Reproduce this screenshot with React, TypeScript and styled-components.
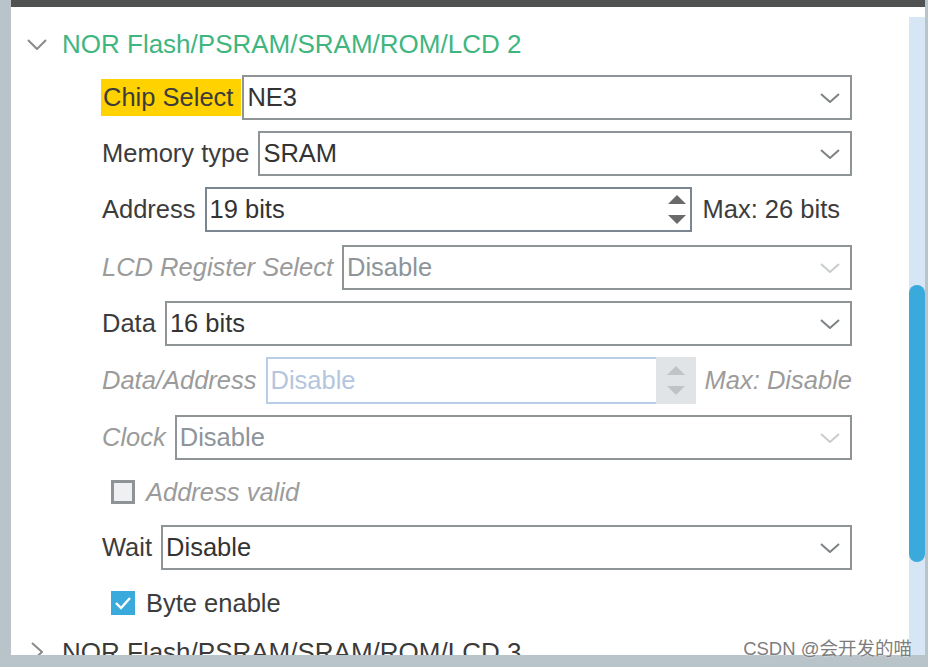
import React from "react";
import styled, { createGlobalStyle, css } from "styled-components";

const Global = createGlobalStyle`
  html, body { margin: 0; padding: 0; background: #b9c3ca; }
  * { box-sizing: border-box; }
`;

const FONT = `"Liberation Sans", Arial, sans-serif`;

const Frame = styled.div`
  position: relative;
  width: 928px;
  height: 667px;
  background: #b9c3ca;
  padding: 0 3px 12px 11px;
  display: flex;
  flex-direction: column;
  overflow: hidden;
  font-family: ${FONT};
`;

const TopBar = styled.div`
  height: 7px;
  flex-shrink: 0;
  background: #505252;
`;

const Body = styled.div`
  flex: 1;
  min-height: 0;
  display: flex;
  background: #ffffff;
`;

const Content = styled.div`
  flex: 1;
  min-width: 0;
  overflow: hidden;
  display: flex;
  flex-direction: column;
`;

const ScrollCol = styled.div`
  width: 16px;
  flex-shrink: 0;
  padding-top: 10px;
  display: flex;
  flex-direction: column;
`;

const Track = styled.div`
  flex: 1;
  background: #d6e6f4;
  padding-top: 268px;
`;

const Thumb = styled.div`
  height: 277px;
  background: #3aa9dc;
  border-radius: 8px;
`;

const Header = styled.div<{ $mt: number; $dark?: boolean }>`
  height: 40px;
  flex-shrink: 0;
  margin-top: ${(p) => p.$mt}px;
  display: flex;
  align-items: center;
  padding-left: 16px;
  gap: 15px;
  font-size: 26px;
  color: ${(p) => (p.$dark ? "#3a3a3a" : "#3fb67f")};
  white-space: nowrap;
`;

const HeaderIcon = styled.span`
  width: 20px;
  display: flex;
  justify-content: center;
  align-items: center;
`;

const Form = styled.div`
  padding: 0 57px 0 91px;
  margin-top: 11px;
  display: flex;
  flex-direction: column;
`;

const Row = styled.div<{ $h?: number; $gap?: number }>`
  display: flex;
  align-items: center;
  height: ${(p) => p.$h ?? 45}px;
  margin-bottom: ${(p) => p.$gap ?? 11}px;
  flex-shrink: 0;
`;

const Label = styled.span<{ $disabled?: boolean; $hl?: boolean }>`
  font-size: 25.5px;
  white-space: nowrap;
  color: ${(p) => (p.$disabled ? "#9b9b9b" : "#3c3c3c")};
  font-style: ${(p) => (p.$disabled ? "italic" : "normal")};
  margin-right: 9px;
  ${(p) =>
    p.$hl &&
    css`
      background: #ffd200;
      margin-left: -1px;
      margin-right: 1px;
      padding: 0 8px 0 2px;
      height: 37px;
      line-height: 37px;
    `}
`;

const Select = styled.div<{ $disabled?: boolean }>`
  flex: 1;
  height: 100%;
  border: 2px solid #8f9497;
  background: #fff;
  display: flex;
  align-items: center;
  padding: 0 10px 0 3px;
  font-size: 25.5px;
  color: ${(p) => (p.$disabled ? "#8d949a" : "#333333")};
`;

const Value = styled.span`
  flex: 1;
  white-space: nowrap;
`;

const SpinBox = styled.div<{ $disabled?: boolean }>`
  flex: 1;
  height: 100%;
  display: flex;
  align-items: stretch;
  border: 2px solid ${(p) => (p.$disabled ? "#b8cde6" : "#7a8691")};
  background: #fff;
  font-size: 25.5px;
  color: ${(p) => (p.$disabled ? "#b4c6de" : "#333333")};
`;

const SpinText = styled.span`
  flex: 1;
  display: flex;
  align-items: center;
  padding-left: 3px;
  white-space: nowrap;
`;

const SpinButtons = styled.div<{ $disabled?: boolean }>`
  width: ${(p) => (p.$disabled ? 40 : 25)}px;
  display: flex;
  flex-direction: column;
  justify-content: center;
  align-items: center;
  gap: 11px;
  ${(p) =>
    p.$disabled &&
    css`
      background: #e1e4e7;
      margin: -2px -2px -2px 0;
    `}
`;

const MaxText = styled.span<{ $disabled?: boolean; $trail?: number }>`
  font-size: 25.5px;
  white-space: nowrap;
  padding-left: ${(p) => (p.$disabled ? 9 : 11)}px;
  padding-right: ${(p) => p.$trail ?? 0}px;
  color: ${(p) => (p.$disabled ? "#9b9b9b" : "#3c3c3c")};
  font-style: ${(p) => (p.$disabled ? "italic" : "normal")};
`;

const CheckRow = styled.div<{ $gap: number }>`
  display: flex;
  align-items: center;
  height: 24px;
  margin-bottom: ${(p) => p.$gap}px;
  padding-left: 9px;
  gap: 11px;
  flex-shrink: 0;
`;

const Box = styled.span<{ $checked?: boolean }>`
  width: 24px;
  height: 24px;
  display: flex;
  align-items: center;
  justify-content: center;
  ${(p) =>
    p.$checked
      ? css`
          background: #3aa9dc;
        `
      : css`
          background: #eef0f2;
          border: 3px solid #8e9396;
        `}
`;

const CheckLabel = styled.span<{ $disabled?: boolean }>`
  font-size: 25.5px;
  white-space: nowrap;
  color: ${(p) => (p.$disabled ? "#9b9b9b" : "#3c3c3c")};
  font-style: ${(p) => (p.$disabled ? "italic" : "normal")};
`;

const Watermark = styled.div`
  position: absolute;
  right: 16px;
  bottom: 7px;
  font-family: "Liberation Sans", "Noto Sans CJK SC", sans-serif;
  font-size: 18.5px;
  color: #7d7d7d;
  text-shadow: 0 0 2px #ffffff;
  white-space: nowrap;
`;

const Chevron = ({ light }: { light?: boolean }) => (
  <svg width="20" height="10" viewBox="0 0 20 10">
    <polyline
      points="1,1 10,9 19,1"
      fill="none"
      stroke={light ? "#c9ccce" : "#7d8285"}
      strokeWidth="2"
    />
  </svg>
);

const Arrows = ({ light }: { light?: boolean }) => {
  const c = light ? "#c0c3c6" : "#6a6a6a";
  return (
    <>
      <svg width="18" height="9" viewBox="0 0 18 9">
        <polygon points="9,0 18,9 0,9" fill={c} />
      </svg>
      <svg width="18" height="9" viewBox="0 0 18 9">
        <polygon points="0,0 18,0 9,9" fill={c} />
      </svg>
    </>
  );
};

const SelectField = ({ value, disabled }: { value: string; disabled?: boolean }) => (
  <Select $disabled={disabled}>
    <Value>{value}</Value>
    <Chevron light={disabled} />
  </Select>
);

export default function App() {
  return (
    <>
      <Global />
      <Frame>
        <TopBar />
        <Body>
          <Content>
            <Header $mt={17}>
              <HeaderIcon>
                <svg width="20" height="11" viewBox="0 0 20 11">
                  <polyline points="1,1 10,10 19,1" fill="none" stroke="#8a8a8a" strokeWidth="2" />
                </svg>
              </HeaderIcon>
              NOR Flash/PSRAM/SRAM/ROM/LCD 2
            </Header>
            <Form>
              <Row>
                <Label $hl>Chip Select</Label>
                <SelectField value="NE3" />
              </Row>
              <Row>
                <Label>Memory type</Label>
                <SelectField value="SRAM" />
              </Row>
              <Row $gap={13}>
                <Label>Address</Label>
                <SpinBox>
                  <SpinText>19 bits</SpinText>
                  <SpinButtons>
                    <Arrows />
                  </SpinButtons>
                </SpinBox>
                <MaxText $trail={12}>Max: 26 bits</MaxText>
              </Row>
              <Row>
                <Label $disabled>LCD Register Select</Label>
                <SelectField value="Disable" disabled />
              </Row>
              <Row>
                <Label>Data</Label>
                <SelectField value="16 bits" />
              </Row>
              <Row $h={47}>
                <Label $disabled>Data/Address</Label>
                <SpinBox $disabled>
                  <SpinText>Disable</SpinText>
                  <SpinButtons $disabled>
                    <Arrows light />
                  </SpinButtons>
                </SpinBox>
                <MaxText $disabled>Max: Disable</MaxText>
              </Row>
              <Row $gap={20}>
                <Label $disabled>Clock</Label>
                <SelectField value="Disable" disabled />
              </Row>
              <CheckRow $gap={21}>
                <Box />
                <CheckLabel $disabled>Address valid</CheckLabel>
              </CheckRow>
              <Row $gap={21}>
                <Label>Wait</Label>
                <SelectField value="Disable" />
              </Row>
              <CheckRow $gap={0}>
                <Box $checked>
                  <svg width="24" height="24" viewBox="0 0 24 24">
                    <polyline points="5,12 10,17 19,7" fill="none" stroke="#ffffff" strokeWidth="2.4" />
                  </svg>
                </Box>
                <CheckLabel>Byte enable</CheckLabel>
              </CheckRow>
            </Form>
            <Header $mt={17} $dark>
              <HeaderIcon>
                <svg width="12" height="20" viewBox="0 0 12 20">
                  <polyline points="1,1 11,10 1,19" fill="none" stroke="#8a8a8a" strokeWidth="2" />
                </svg>
              </HeaderIcon>
              NOR Flash/PSRAM/SRAM/ROM/LCD 3
            </Header>
          </Content>
          <ScrollCol>
            <Track>
              <Thumb />
            </Track>
          </ScrollCol>
        </Body>
        <Watermark>CSDN @会开发的喵</Watermark>
      </Frame>
    </>
  );
}
